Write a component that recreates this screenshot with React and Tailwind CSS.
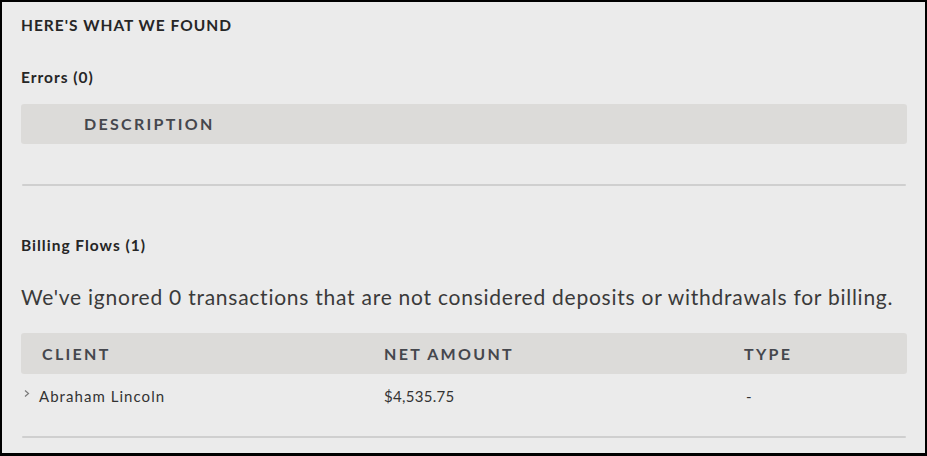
export default function App() {
  const font = { fontFamily: "Lato, 'Noto Sans', sans-serif" };
  return (
    <div className="w-[927px] h-[456px] bg-black" style={font}>
      <div className="w-[927px] h-[456px] border-t-2 border-l-2 border-r-2 border-b-[3px] border-black bg-[#ebebeb] pl-[19px] pr-[18px] flex flex-col">
        <div className="mt-[13px] h-[20px] leading-[20px] text-[15.5px] font-bold text-[#262626] tracking-[1px]">
          HERE'S WHAT WE FOUND
        </div>
        <div className="mt-[32px] h-[20px] leading-[20px] text-[15.5px] font-bold text-[#262626] tracking-[1px]">
          Errors (0)
        </div>
        <div className="mt-[17px] h-[40px] rounded-[3px] bg-[#dcdbd9] flex items-center pl-[63px] text-[16px] font-bold tracking-[2.3px] text-[#45474d]">
          DESCRIPTION
        </div>
        <div className="mt-[40px] mx-[1px] h-[2px] bg-[#cfcfcf] rounded-full" />
        <div className="mt-[49px] h-[20px] leading-[20px] text-[15.5px] font-bold text-[#262626] tracking-[1px]">
          Billing Flows (1)
        </div>
        <div className="mt-[30px] h-[24px] leading-[24px] text-[21px] text-[#3a3a3a] tracking-[0.75px] whitespace-nowrap">
          We've ignored 0 transactions that are not considered deposits or withdrawals for billing.
        </div>
        <div className="mt-[24px] h-[41px] rounded-[3px] bg-[#dcdbd9] grid grid-cols-[343px_360px_1fr] items-center text-[16px] font-bold tracking-[2.3px] text-[#45474d]">
          <div className="pl-[21px]">CLIENT</div>
          <div className="pl-[20px]">NET AMOUNT</div>
          <div className="pl-[20px]">TYPE</div>
        </div>
        <div className="h-[44px] grid grid-cols-[343px_360px_1fr] items-center text-[15px] text-[#333]">
          <div className="flex items-center">
            <svg width="8" height="10" viewBox="0 0 8 10" className="ml-[2px] -mt-[4px]">
              <polyline points="2,1.5 5.5,4.5 2,7.5" fill="none" stroke="#7a7a7a" strokeWidth="1.2" />
            </svg>
            <span className="ml-[8px] tracking-[1.05px]">Abraham Lincoln</span>
          </div>
          <div className="pl-[20px] tracking-[0.3px]">$4,535.75</div>
          <div className="pl-[22px]">-</div>
        </div>
        <div className="mt-[18px] mx-[1px] h-[2px] bg-[#cfcfcf] rounded-full" />
      </div>
    </div>
  );
}
